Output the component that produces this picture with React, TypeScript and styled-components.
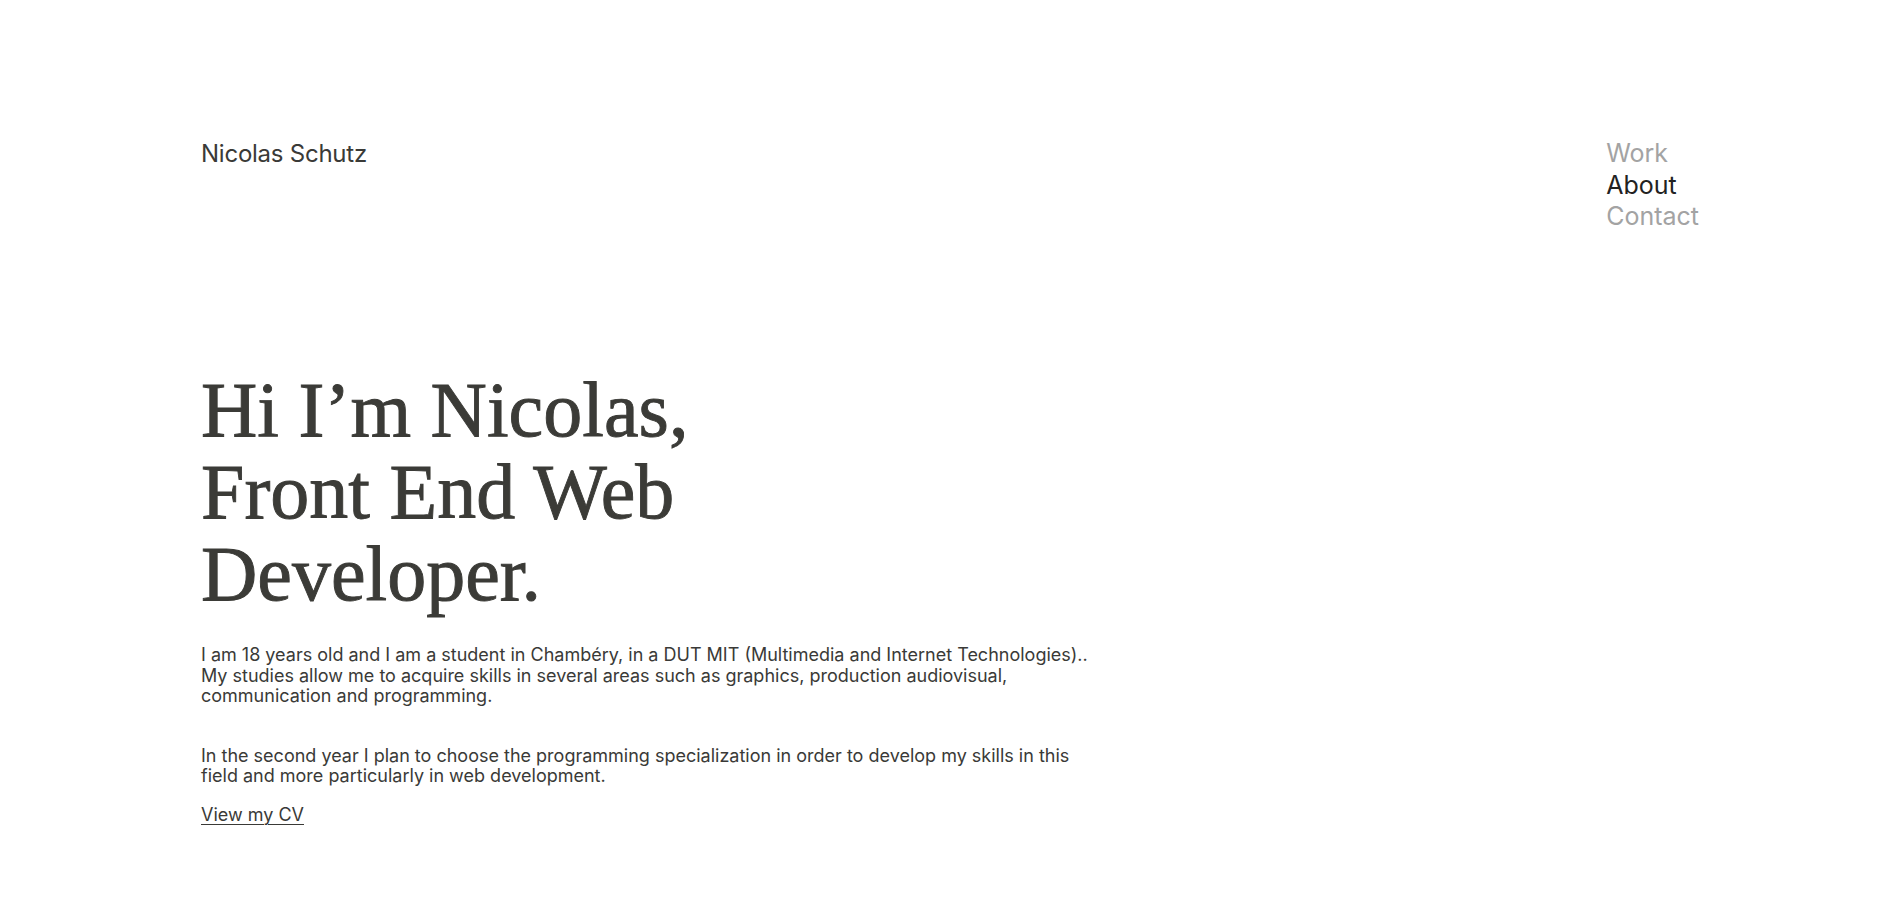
import React from "react";
import styled, { createGlobalStyle } from "styled-components";

const GlobalStyle = createGlobalStyle`
  html, body { margin: 0; padding: 0; background: #ffffff; }
  body { font-family: Inter, "Noto Sans", sans-serif; color: #3a3a37; }
`;

const Page = styled.div`
  padding: 138px 198px 80px 201px;
  box-sizing: border-box;
  min-height: 897px;
`;

const Header = styled.header`
  display: flex;
  justify-content: space-between;
  align-items: flex-start;
`;

const Brand = styled.a`
  font-size: 24px;
  line-height: 31px;
  color: #3a3a37;
  text-decoration: none;
  letter-spacing: -0.01em;
`;

const Nav = styled.nav`
  display: flex;
  flex-direction: column;
  align-items: flex-start;
`;

const NavLink = styled.a<{ $active?: boolean }>`
  font-size: 25px;
  line-height: 31.5px;
  letter-spacing: 0;
  text-decoration: none;
  color: ${(p) => (p.$active ? "#222222" : "#a3a3a3")};
`;

const Hero = styled.section`
  margin-top: 136px;
  max-width: 900px;
`;

const Title = styled.h1`
  margin: 0;
  font-family: "Liberation Serif", "DejaVu Serif", serif;
  font-weight: 400;
  font-size: 78px;
  line-height: 82.3px;
  color: #3b3b37;
  -webkit-text-stroke: 0.9px #3b3b37;
  width: 620px;
`;

const Text = styled.p<{ $gap?: number }>`
  margin: ${(p) => p.$gap ?? 0}px 0 0;
  font-size: 18px;
  line-height: 20.5px;
  letter-spacing: 0;
  color: #3a3a37;
`;

const CvLink = styled.a`
  display: inline-block;
  margin-top: 18px;
  font-size: 18px;
  line-height: 20.5px;
  color: #3a3a37;
  text-decoration: underline;
  text-decoration-thickness: 1px;
  text-underline-offset: 3px;
`;

export default function App() {
  return (
    <>
      <GlobalStyle />
      <Page>
        <Header>
          <Brand href="#">Nicolas Schutz</Brand>
          <Nav>
            <NavLink href="#">Work</NavLink>
            <NavLink href="#" $active>
              About
            </NavLink>
            <NavLink href="#">Contact</NavLink>
          </Nav>
        </Header>
        <Hero>
          <Title>
            Hi I’m Nicolas,
            <br />
            Front End Web
            <br />
            Developer.
          </Title>
          <Text $gap={30}>
            I am 18 years old and I am a student in Chambéry, in a DUT MIT (Multimedia and Internet
            Technologies).. My studies allow me to acquire skills in several areas such as graphics,
            production audiovisual, communication and programming.
          </Text>
          <Text $gap={39}>
            In the second year I plan to choose the programming specialization in order to develop
            my skills in this field and more particularly in web development.
          </Text>
          <CvLink href="#">View my CV</CvLink>
        </Hero>
      </Page>
    </>
  );
}
